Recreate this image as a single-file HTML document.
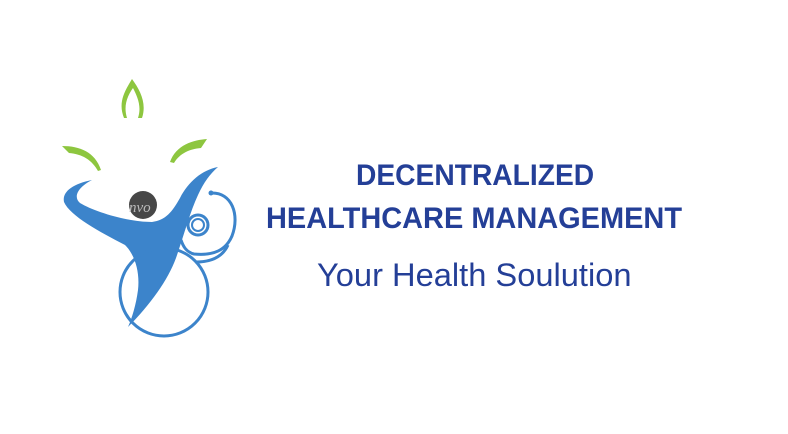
<!DOCTYPE html>
<html><head><meta charset="utf-8"><style>
html,body{margin:0;padding:0;background:#fff;width:788px;height:434px;overflow:hidden;position:relative}
.t{position:absolute;color:#243f97;font-family:"Liberation Sans",sans-serif;white-space:nowrap}
.t span{display:inline-block;transform-origin:0 0}
</style></head><body>
<svg width="788" height="434" style="position:absolute;left:0;top:0">
<g fill="#8dc63f">
<path d="M132,79 C124,92 118,103 124,118 L127,118 C123,105 128,95 133,88 C137,96 142,106 138,118 L142,118 C147,103 140,90 132,79Z"/>
<path d="M62,146 C80,146 95,152 101,170 L98,171 C92,160 82,154 69,153 Z"/>
<path d="M207,139 C193,140 176,145 170,162 L174,163 C180,153 190,149 201,148 Z"/>
</g>
<g fill="#3c84cb">
<path d="M92,180 C72,184 62,192 64,202 C70,216 100,232 125,245 C135,255 140,272 138,290 C136,305 132,318 128,327 C150,305 168,280 176,258 C184,235 190,212 198,195 C204,182 210,174 218,167 C202,170 188,182 180,198 C172,212 166,220 152,222 C128,222 95,212 80,203 C72,196 80,186 92,180Z"/>
</g>
<g fill="none" stroke="#3c84cb" stroke-width="3">
<circle cx="164" cy="292" r="44"/>
<circle cx="198" cy="225" r="10"/>
<path d="M211,193 C232,192 240,215 232,236 C226,250 214,256 194,254 C186,252 183,246 181,240"/>
<path d="M228,245 C222,258 210,262 196,262"/>
</g>
<circle cx="198" cy="225" r="6" fill="#fff" stroke="#3c84cb" stroke-width="2"/>
<circle cx="211" cy="193" r="2.5" fill="#3c84cb"/>
<circle cx="143" cy="205" r="14" fill="#474747"/>
<text x="129" y="212" font-family="Liberation Serif,serif" font-style="italic" font-size="15" fill="#bbb">nvo</text>
</svg>
<div class="t" style="top:159px;left:356px;font-size:30px;font-weight:bold"><span style="transform:scaleX(0.94)">DECENTRALIZED</span></div>
<div class="t" style="top:202px;left:266px;font-size:30px;font-weight:bold"><span style="transform:scaleX(0.965)">HEALTHCARE MANAGEMENT</span></div>
<div class="t" style="top:257px;left:317px;font-size:32px"><span style="transform:scaleX(1.02)">Your Health Soulution</span></div>
</body></html>
